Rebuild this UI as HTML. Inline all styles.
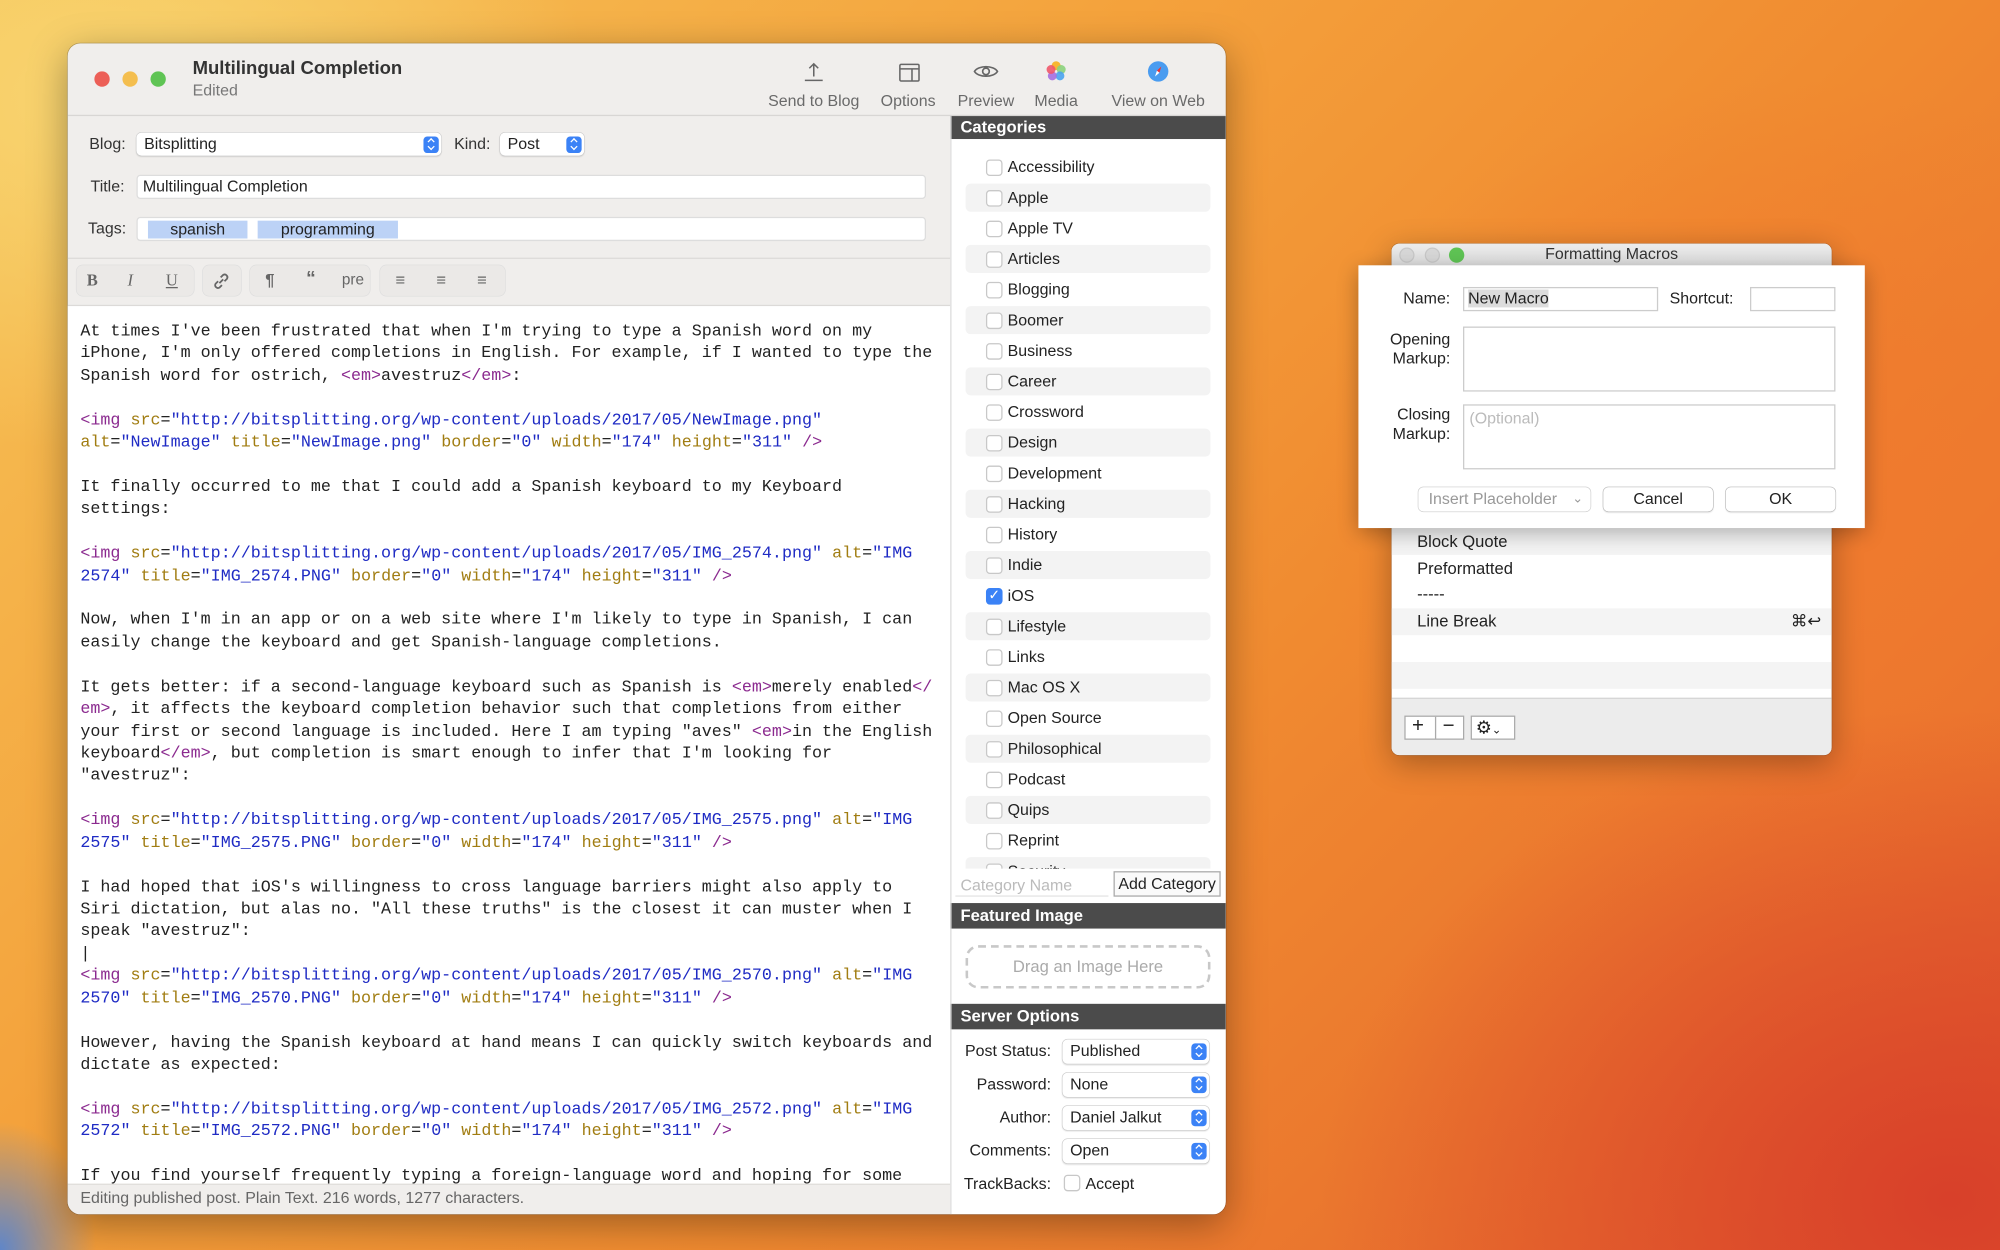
<!DOCTYPE html>
<html><head><meta charset="utf-8">
<style>
*{box-sizing:border-box;margin:0;padding:0}
html,body{width:2000px;height:1250px;overflow:hidden}
body{font-family:"Liberation Sans",sans-serif;color:#222;
background:
radial-gradient(ellipse 120px 160px at 0px 1250px,#5f86c9 0%,#5f86c900 80%),
radial-gradient(ellipse 900px 700px at 1950px 1200px,#d8402a 0%,#d8402a00 70%),
radial-gradient(ellipse 700px 600px at 1800px 500px,#f07a2e 0%,#f07a2e00 70%),
radial-gradient(ellipse 700px 500px at 100px 100px,#f8d470 0%,#f8d47000 70%),
linear-gradient(135deg,#f6c458 0%,#f4a23c 35%,#f08a30 60%,#e4602c 100%);}
#w{position:absolute;left:0;top:0;width:1568px;height:980px;transform:scale(1.27551);transform-origin:0 0}
.a{position:absolute}
.win{left:53px;top:34px;width:908px;height:918px;border-radius:10px;background:#f0eeec;overflow:hidden;box-shadow:0 8px 30px rgba(0,0,0,.35),0 0 0 .5px rgba(0,0,0,.25)}
.tl{width:12px;height:12px;border-radius:50%;top:22px}
.tb{font-size:12.5px;color:#6a6a6a;top:38px;transform:translateX(-50%);white-space:nowrap}
.lbl{font-size:12.5px;color:#333}
.fld{background:#fff;border:1px solid #ddd;border-radius:3px;font-size:12.5px;padding-left:4px;line-height:17px}
.pop{background:#fff;border-radius:4px;box-shadow:0 0 0 .5px #ccc,0 1px 1px rgba(0,0,0,.12);font-size:12.5px;padding-left:6px;line-height:18px}
.pop i{position:absolute;right:2px;top:3px;width:12px;height:13px;border-radius:3px;background:#3b82f6}
.pop i:before{content:"";position:absolute;left:4px;top:2px;width:3px;height:3px;border-left:1px solid #fff;border-top:1px solid #fff;transform:rotate(45deg)}
.pop i:after{content:"";position:absolute;left:4px;top:6px;width:3px;height:3px;border-right:1px solid #fff;border-bottom:1px solid #fff;transform:rotate(45deg)}
.tok{background:#bcd2f6;font-size:12.5px;height:14px;line-height:14px;text-align:center;top:8px}
.fb{top:174px;height:24px;border-radius:5px;background:#ebe9e7;box-shadow:0 0 0 .5px #ddd}
.fb span{position:absolute;top:4px;font-size:13px;color:#666}
pre{font-family:"Liberation Mono",monospace;font-size:13.1px;line-height:17.42px;color:#222}
.t{color:#8b2a8f}.n{color:#a17d12}.s{color:#1f2bc4}
.side{left:692px;top:57px;width:216px;height:861px;background:#fff}
.hdr{background:#4b4b4b;color:#fff;font-weight:bold;font-size:13px;padding-left:8px;line-height:18px;width:216px;left:0}
.row{left:12px;width:192px;height:22px;border-radius:4px}
.row.z{background:#f3f3f3}
.cb{position:absolute;left:16px;top:5px;width:13px;height:13px;border-radius:3px;border:1px solid #c8c8c8;background:#fff}
.row span{position:absolute;left:33px;top:4px;font-size:12.5px}
.sl{font-size:12.5px;text-align:right;width:79px;left:0}
.sp{left:88px;width:115px;height:19px}
</style></head><body><div id="w">

<div class="a win">
 <div class="a tl" style="left:21px;background:#ec5f57"></div>
 <div class="a tl" style="left:43px;background:#f4be4f"></div>
 <div class="a tl" style="left:65px;background:#5fc454"></div>
 <div class="a" style="left:98px;top:12px;font-size:14.5px;font-weight:bold;color:#333">Multilingual Completion</div>
 <div class="a" style="left:98px;top:30px;font-size:12.5px;color:#777">Edited</div>
 <svg class="a" style="left:576px;top:14px" width="18" height="18" viewBox="0 0 18 18" fill="none" stroke="#666" stroke-width="1.2"><path d="M9 2v10M5.5 5.5L9 2l3.5 3.5M2 15h14"/></svg>
 <svg class="a" style="left:651px;top:14px" width="18" height="18" viewBox="0 0 18 18" fill="none" stroke="#666" stroke-width="1.2"><rect x="1.5" y="2.5" width="15" height="13" rx="1"/><path d="M1.5 6h15M11 6v9.5"/></svg>
 <svg class="a" style="left:710px;top:14px" width="20" height="16" viewBox="0 0 20 16" fill="none" stroke="#666" stroke-width="1.3"><path d="M1 8c3-5 15-5 18 0c-3 5-15 5-18 0z"/><circle cx="10" cy="8" r="2.6"/></svg>
 <svg class="a" style="left:766px;top:13px" width="18" height="18" viewBox="0 0 18 18"><circle cx="9" cy="4.5" r="3.5" fill="#f7b731"/><circle cx="13" cy="7.5" r="3.5" fill="#8bd17c" opacity=".9"/><circle cx="12" cy="12.5" r="3.5" fill="#4aa3f0" opacity=".9"/><circle cx="6" cy="12.5" r="3.5" fill="#a66ee0" opacity=".9"/><circle cx="5" cy="7.5" r="3.5" fill="#f0566a" opacity=".9"/></svg>
 <svg class="a" style="left:846px;top:13px" width="18" height="18" viewBox="0 0 18 18"><circle cx="9" cy="9" r="8" fill="#4a9cf0"/><path d="M11.5 5L8 8.5 10 10z" fill="#e33"/><path d="M6.5 13L8 8.5 10 10z" fill="#fff"/></svg>
 <div class="a tb" style="left:585px">Send to Blog</div>
 <div class="a tb" style="left:659px">Options</div>
 <div class="a tb" style="left:720px">Preview</div>
 <div class="a tb" style="left:775px">Media</div>
 <div class="a tb" style="left:855px">View on Web</div>
 <div class="a" style="left:0;top:56px;width:908px;height:1px;background:#d8d6d4"></div>

 <div class="a lbl" style="left:17px;top:72px">Blog:</div>
 <div class="a pop" style="left:54px;top:70px;width:239px;height:18px">Bitsplitting<i></i></div>
 <div class="a lbl" style="left:303px;top:72px">Kind:</div>
 <div class="a pop" style="left:339px;top:70px;width:66px;height:18px">Post<i></i></div>
 <div class="a lbl" style="left:18px;top:105px">Title:</div>
 <div class="a fld" style="left:54px;top:103px;width:619px;height:19px">Multilingual Completion</div>
 <div class="a lbl" style="left:16px;top:138px">Tags:</div>
 <div class="a fld" style="left:54px;top:136px;width:619px;height:19px;padding:0">
  <div class="a tok" style="left:8px;top:2px;width:78px">spanish</div>
  <div class="a tok" style="left:94px;top:2px;width:110px">programming</div>
 </div>
 <div class="a" style="left:0;top:168px;width:692px;height:1px;background:#dcdad8"></div>
 <div class="a fb" style="left:7px;width:92px"><span style="left:8px;font-family:'Liberation Serif',serif;font-weight:bold">B</span><span style="left:40px;font-family:'Liberation Serif',serif;font-style:italic">I</span><span style="left:70px;font-family:'Liberation Serif',serif;text-decoration:underline">U</span></div>
 <div class="a fb" style="left:106px;width:30px"><svg class="a" style="left:7px;top:5px" width="15" height="15" viewBox="0 0 15 15" fill="none" stroke="#666" stroke-width="1.4"><path d="M6 9L9 6M5 7.5L3 9.5a2.2 2.2 0 003 3L8 10.5M7 4.5L9 2.5a2.2 2.2 0 013 3L10 7.5"/></svg></div>
 <div class="a fb" style="left:143px;width:94px"><span style="left:12px;font-weight:bold">¶</span><span style="left:44px;font-weight:bold;font-size:15px;top:2px">“</span><span style="left:72px;font-size:12px">pre</span></div>
 <div class="a fb" style="left:245px;width:98px"><span style="left:12px">≡</span><span style="left:44px">≡</span><span style="left:76px">≡</span></div>
 <div class="a" style="left:0;top:205px;width:692px;height:1px;background:#dcdad8"></div>
 <div class="a" style="left:0;top:206px;width:692px;height:688px;background:#fff;overflow:hidden">
<pre class="a" style="left:10px;top:11px">At times I've been frustrated that when I'm trying to type a Spanish word on my
iPhone, I'm only offered completions in English. For example, if I wanted to type the
Spanish word for ostrich, <span class="t">&lt;em&gt;</span>avestruz<span class="t">&lt;/em&gt;</span>:

<span class="t">&lt;img</span> <span class="n">src</span>=<span class="s">"http://bitsplitting.org/wp-content/uploads/2017/05/NewImage.png"</span>
<span class="n">alt</span>=<span class="s">"NewImage"</span> <span class="n">title</span>=<span class="s">"NewImage.png"</span> <span class="n">border</span>=<span class="s">"0"</span> <span class="n">width</span>=<span class="s">"174"</span> <span class="n">height</span>=<span class="s">"311"</span> <span class="t">/&gt;</span>

It finally occurred to me that I could add a Spanish keyboard to my Keyboard
settings:

<span class="t">&lt;img</span> <span class="n">src</span>=<span class="s">"http://bitsplitting.org/wp-content/uploads/2017/05/IMG_2574.png"</span> <span class="n">alt</span>=<span class="s">"IMG
2574"</span> <span class="n">title</span>=<span class="s">"IMG_2574.PNG"</span> <span class="n">border</span>=<span class="s">"0"</span> <span class="n">width</span>=<span class="s">"174"</span> <span class="n">height</span>=<span class="s">"311"</span> <span class="t">/&gt;</span>

Now, when I'm in an app or on a web site where I'm likely to type in Spanish, I can
easily change the keyboard and get Spanish-language completions.

It gets better: if a second-language keyboard such as Spanish is <span class="t">&lt;em&gt;</span>merely enabled<span class="t">&lt;/</span>
<span class="t">em&gt;</span>, it affects the keyboard completion behavior such that completions from either
your first or second language is included. Here I am typing "aves" <span class="t">&lt;em&gt;</span>in the English
keyboard<span class="t">&lt;/em&gt;</span>, but completion is smart enough to infer that I'm looking for
"avestruz":

<span class="t">&lt;img</span> <span class="n">src</span>=<span class="s">"http://bitsplitting.org/wp-content/uploads/2017/05/IMG_2575.png"</span> <span class="n">alt</span>=<span class="s">"IMG
2575"</span> <span class="n">title</span>=<span class="s">"IMG_2575.PNG"</span> <span class="n">border</span>=<span class="s">"0"</span> <span class="n">width</span>=<span class="s">"174"</span> <span class="n">height</span>=<span class="s">"311"</span> <span class="t">/&gt;</span>

I had hoped that iOS's willingness to cross language barriers might also apply to
Siri dictation, but alas no. "All these truths" is the closest it can muster when I
speak "avestruz":
|
<span class="t">&lt;img</span> <span class="n">src</span>=<span class="s">"http://bitsplitting.org/wp-content/uploads/2017/05/IMG_2570.png"</span> <span class="n">alt</span>=<span class="s">"IMG
2570"</span> <span class="n">title</span>=<span class="s">"IMG_2570.PNG"</span> <span class="n">border</span>=<span class="s">"0"</span> <span class="n">width</span>=<span class="s">"174"</span> <span class="n">height</span>=<span class="s">"311"</span> <span class="t">/&gt;</span>

However, having the Spanish keyboard at hand means I can quickly switch keyboards and
dictate as expected:

<span class="t">&lt;img</span> <span class="n">src</span>=<span class="s">"http://bitsplitting.org/wp-content/uploads/2017/05/IMG_2572.png"</span> <span class="n">alt</span>=<span class="s">"IMG
2572"</span> <span class="n">title</span>=<span class="s">"IMG_2572.PNG"</span> <span class="n">border</span>=<span class="s">"0"</span> <span class="n">width</span>=<span class="s">"174"</span> <span class="n">height</span>=<span class="s">"311"</span> <span class="t">/&gt;</span>

If you find yourself frequently typing a foreign-language word and hoping for some</pre>
 </div>
 <div class="a" style="left:0;top:894px;width:692px;height:24px;background:#f0eeec;border-top:1px solid #e0dedc"></div>
 <div class="a" style="left:10px;top:898px;font-size:12.5px;color:#666">Editing published post. Plain Text. 216 words, 1277 characters.</div>

 <div class="a side">
  <div class="a hdr" style="top:0">Categories</div>
  <div class="a" style="left:0;top:18px;width:216px;height:572px;overflow:hidden">
   <div class="a row" style="top:11px"><div class="cb"></div><span>Accessibility</span></div>
   <div class="a row z" style="top:35px"><div class="cb"></div><span>Apple</span></div>
   <div class="a row" style="top:59px"><div class="cb"></div><span>Apple TV</span></div>
   <div class="a row z" style="top:83px"><div class="cb"></div><span>Articles</span></div>
   <div class="a row" style="top:107px"><div class="cb"></div><span>Blogging</span></div>
   <div class="a row z" style="top:131px"><div class="cb"></div><span>Boomer</span></div>
   <div class="a row" style="top:155px"><div class="cb"></div><span>Business</span></div>
   <div class="a row z" style="top:179px"><div class="cb"></div><span>Career</span></div>
   <div class="a row" style="top:203px"><div class="cb"></div><span>Crossword</span></div>
   <div class="a row z" style="top:227px"><div class="cb"></div><span>Design</span></div>
   <div class="a row" style="top:251px"><div class="cb"></div><span>Development</span></div>
   <div class="a row z" style="top:275px"><div class="cb"></div><span>Hacking</span></div>
   <div class="a row" style="top:299px"><div class="cb"></div><span>History</span></div>
   <div class="a row z" style="top:323px"><div class="cb"></div><span>Indie</span></div>
   <div class="a row" style="top:347px"><div class="cb" style="background:#3b82f6;border-color:#3b82f6;color:#fff;font-size:11px;line-height:11px;text-align:center">✓</div><span>iOS</span></div>
   <div class="a row z" style="top:371px"><div class="cb"></div><span>Lifestyle</span></div>
   <div class="a row" style="top:395px"><div class="cb"></div><span>Links</span></div>
   <div class="a row z" style="top:419px"><div class="cb"></div><span>Mac OS X</span></div>
   <div class="a row" style="top:443px"><div class="cb"></div><span>Open Source</span></div>
   <div class="a row z" style="top:467px"><div class="cb"></div><span>Philosophical</span></div>
   <div class="a row" style="top:491px"><div class="cb"></div><span>Podcast</span></div>
   <div class="a row z" style="top:515px"><div class="cb"></div><span>Quips</span></div>
   <div class="a row" style="top:539px"><div class="cb"></div><span>Reprint</span></div>
   <div class="a row z" style="top:563px"><div class="cb"></div><span>Security</span></div>
  </div>
  <div class="a" style="left:4px;top:593px;width:120px;height:19px;border-bottom:1px solid #e4e4e4;font-size:12.5px;color:#bbb;padding:3px 4px">Category Name</div>
  <div class="a" style="left:128px;top:592px;width:84px;height:20px;border:1px solid #aaa;font-size:12.5px;text-align:center;line-height:18px;background:#fafafa">Add Category</div>
  <div class="a hdr" style="top:617px;height:20px;line-height:20px">Featured Image</div>
  <div class="a" style="left:12px;top:650px;width:192px;height:34px;border:2px dashed #c8c8c8;border-radius:10px;font-size:13px;color:#aaa;text-align:center;line-height:30px">Drag an Image Here</div>
  <div class="a hdr" style="top:696px;height:20px;line-height:20px">Server Options</div>
  <div class="a sl" style="top:726px">Post Status:</div>
  <div class="a pop sp" style="top:724px">Published<i></i></div>
  <div class="a sl" style="top:752px">Password:</div>
  <div class="a pop sp" style="top:750px">None<i></i></div>
  <div class="a sl" style="top:778px">Author:</div>
  <div class="a pop sp" style="top:776px">Daniel Jalkut<i></i></div>
  <div class="a sl" style="top:804px">Comments:</div>
  <div class="a pop sp" style="top:802px">Open<i></i></div>
  <div class="a sl" style="top:830px">TrackBacks:</div>
  <div class="a" style="left:89px;top:830px;width:13px;height:13px;border:1px solid #c8c8c8;border-radius:3px"></div>
  <div class="a" style="left:106px;top:830px;font-size:12.5px">Accept</div>
 </div>
 <div class="a" style="left:692px;top:57px;width:1px;height:861px;background:#ddd"></div>
</div>

<!-- Formatting Macros window -->
<div class="a" style="left:1091px;top:191px;width:345px;height:401px;background:#fff;border-radius:6px;overflow:hidden;box-shadow:0 6px 24px rgba(0,0,0,.3),0 0 0 .5px rgba(0,0,0,.2)">
 <div class="a" style="left:0;top:0;width:345px;height:18px;background:linear-gradient(#ececec,#dcdcdc);font-size:12.5px;text-align:center;line-height:17px;color:#333">Formatting Macros</div>
 <div class="a" style="left:6px;top:3px;width:12px;height:12px;border-radius:50%;background:#d8d8d8;border:1px solid #c8c8c8"></div>
 <div class="a" style="left:26px;top:3px;width:12px;height:12px;border-radius:50%;background:#d8d8d8;border:1px solid #c8c8c8"></div>
 <div class="a" style="left:45px;top:3px;width:12px;height:12px;border-radius:50%;background:#5fc454"></div>
 <div class="a" style="left:0;top:223px;width:345px;height:21px;background:#f4f4f4"></div>
 <div class="a" style="left:20px;top:226px;font-size:13px">Block Quote</div>
 <div class="a" style="left:20px;top:247px;font-size:13px">Preformatted</div>
 <div class="a" style="left:20px;top:267px;font-size:13px">-----</div>
 <div class="a" style="left:0;top:286px;width:345px;height:21px;background:#f4f4f4"></div>
 <div class="a" style="left:20px;top:288px;font-size:13px">Line Break</div>
 <div class="a" style="left:313px;top:288px;font-size:13px">⌘↩</div>
 <div class="a" style="left:0;top:328px;width:345px;height:21px;background:#f4f4f4"></div>
 <div class="a" style="left:0;top:356px;width:345px;height:45px;background:#ececec;border-top:1px solid #d6d6d6"></div>
 <div class="a" style="left:10px;top:370px;width:47px;height:19px;border:1px solid #aaa;background:#fff;font-size:16px;line-height:16px"><span class="a" style="left:5px;top:0">+</span><span class="a" style="left:23px;top:0;height:17px;border-left:1px solid #aaa;padding-left:5px">−</span></div>
 <div class="a" style="left:62px;top:370px;width:35px;height:19px;border:1px solid #aaa;background:#fff;font-size:14px;line-height:17px;padding-left:3px">⚙<span style="font-size:9px">⌄</span></div>
</div>
<!-- sheet -->
<div class="a" style="left:1065px;top:208px;width:397px;height:206px;background:#fff;box-shadow:0 4px 16px rgba(0,0,0,.3)">
 <div class="a" style="left:0;top:19px;width:72px;text-align:right;font-size:12.5px">Name:</div>
 <div class="a" style="left:82px;top:17px;width:153px;height:19px;border:1px solid #ccc;font-size:12.5px;line-height:17px;padding-left:3px"><span style="background:#dcdcdc">New Macro</span></div>
 <div class="a" style="left:244px;top:19px;font-size:12.5px">Shortcut:</div>
 <div class="a" style="left:307px;top:17px;width:67px;height:19px;border:1px solid #ccc"></div>
 <div class="a" style="left:0;top:51px;width:72px;text-align:right;font-size:12.5px;line-height:15px">Opening<br>Markup:</div>
 <div class="a" style="left:82px;top:48px;width:292px;height:51px;border:1px solid #ccc"></div>
 <div class="a" style="left:0;top:110px;width:72px;text-align:right;font-size:12.5px;line-height:15px">Closing<br>Markup:</div>
 <div class="a" style="left:82px;top:109px;width:292px;height:51px;border:1px solid #ccc;font-size:12.5px;color:#bbb;padding:3px 4px">(Optional)</div>
 <div class="a" style="left:47px;top:174px;width:135px;height:19px;border-radius:4px;box-shadow:0 0 0 .5px #ccc;font-size:12.5px;color:#999;line-height:19px;padding-left:8px">Insert Placeholder <span style="position:absolute;right:6px;font-size:10px">⌄</span></div>
 <div class="a" style="left:192px;top:174px;width:86px;height:19px;border-radius:4px;box-shadow:0 0 0 .5px #bbb,0 1px 1px rgba(0,0,0,.1);font-size:12.5px;text-align:center;line-height:19px">Cancel</div>
 <div class="a" style="left:288px;top:174px;width:86px;height:19px;border-radius:4px;box-shadow:0 0 0 .5px #bbb,0 1px 1px rgba(0,0,0,.1);font-size:12.5px;text-align:center;line-height:19px">OK</div>
</div>
</div></body></html>
